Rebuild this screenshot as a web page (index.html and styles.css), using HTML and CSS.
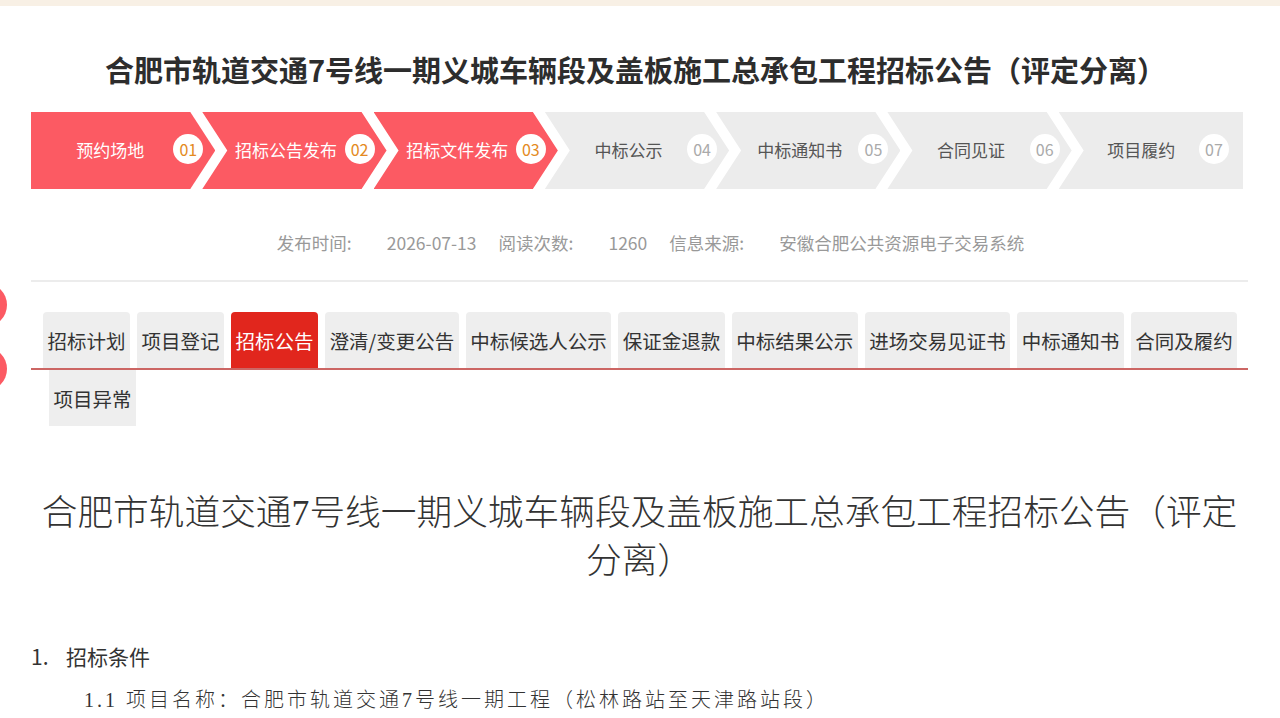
FILE: index.html
```html
<!DOCTYPE html>
<html lang="zh-CN">
<head>
<meta charset="utf-8">
<title>合肥市轨道交通7号线一期义城车辆段及盖板施工总承包工程招标公告（评定分离）</title>
<link rel="stylesheet" href="styles.css">
</head>
<body>
<div class="topbar"></div>

<div class="side-dock">
  <span class="side-dot"></span>
  <span class="side-dot"></span>
</div>

<main class="page">
  <h1 class="page-title">合肥市轨道交通7号线一期义城车辆段及盖板施工总承包工程招标公告（评定分离）</h1>

  <ol class="steps">
    <li class="step step-first is-done"><span class="step-label">预约场地</span><span class="step-num">01</span></li>
    <li class="step is-done"><span class="step-label">招标公告发布</span><span class="step-num">02</span></li>
    <li class="step is-done"><span class="step-label">招标文件发布</span><span class="step-num">03</span></li>
    <li class="step"><span class="step-label">中标公示</span><span class="step-num">04</span></li>
    <li class="step"><span class="step-label">中标通知书</span><span class="step-num">05</span></li>
    <li class="step"><span class="step-label">合同见证</span><span class="step-num">06</span></li>
    <li class="step step-last"><span class="step-label">项目履约</span><span class="step-num">07</span></li>
  </ol>

  <div class="meta">
    <span class="meta-item"><span class="meta-key">发布时间:</span><span class="meta-val">2026-07-13</span></span>
    <span class="meta-item"><span class="meta-key">阅读次数:</span><span class="meta-val">1260</span></span>
    <span class="meta-item"><span class="meta-key">信息来源:</span><span class="meta-val">安徽合肥公共资源电子交易系统</span></span>
  </div>

  <ul class="tabs">
    <li class="tab">招标计划</li>
    <li class="tab">项目登记</li>
    <li class="tab tab-active">招标公告</li>
    <li class="tab">澄清/变更公告</li>
    <li class="tab">中标候选人公示</li>
    <li class="tab">保证金退款</li>
    <li class="tab">中标结果公示</li>
    <li class="tab">进场交易见证书</li>
    <li class="tab">中标通知书</li>
    <li class="tab">合同及履约</li>
    <li class="tab tab-wrap">项目异常</li>
  </ul>

  <article class="notice">
    <h2 class="notice-title">合肥市轨道交通7号线一期义城车辆段及盖板施工总承包工程招标公告（评定分离）</h2>
    <h3 class="notice-section"><span class="section-no">1.</span>招标条件</h3>
    <p class="notice-line">1.1 项目名称：合肥市轨道交通7号线一期工程（松林路站至天津路站段）</p>
  </article>
</main>
</body>
</html>
```

FILE: styles.css
```css
* {
  box-sizing: border-box;
}

html, body {
  margin: 0;
  padding: 0;
  background: #fff;
  overflow: hidden;
}

body {
  font-family: "Noto Sans CJK SC", "Liberation Sans", sans-serif;
  color: #333;
}

.topbar {
  height: 6px;
  background: #f8f0e5;
}

/* floating dock on the left edge */
.side-dock {
  position: fixed;
  left: -37px;
  top: 283px;
  display: flex;
  flex-direction: column;
  gap: 20px;
}

.side-dot {
  display: block;
  width: 44px;
  height: 44px;
  border-radius: 50%;
  background: #fc5a63;
}

.page {
  width: 1217px;
  margin-left: 31px;
}

.page-title {
  margin: 43px 0 0;
  font-size: 29px;
  line-height: 40px;
  font-weight: 700;
  color: #2d2d2d;
  text-align: center;
  padding-right: 8px;
}

/* progress chevrons: seven equal arrows overlapping by 13px */
.steps {
  list-style: none;
  margin: 23px 0 0;
  padding: 0;
  display: flex;
  width: 1212px;
  height: 77px;
}

.step {
  flex: 0 0 calc((1212px + 78px) / 7);
  margin-right: -13px;
  display: flex;
  align-items: center;
  padding: 0 12px 3px 25px;
  background: #ececec;
  color: #555;
  font-size: 17px;
  clip-path: polygon(0 0, calc(100% - 25px) 0, 100% 50%, calc(100% - 25px) 100%, 0 100%, 25px 50%);
}

.step-first {
  padding-left: 16px;
  clip-path: polygon(0 0, calc(100% - 25px) 0, 100% 50%, calc(100% - 25px) 100%, 0 100%);
}

.step-last {
  margin-right: 0;
  padding-right: 14px;
  clip-path: polygon(0 0, 100% 0, 100% 100%, 0 100%, 25px 50%);
}

.step.is-done {
  background: #fc5a63;
  color: #fff;
}

.step-label {
  flex: 1;
  text-align: center;
  white-space: nowrap;
}

.step-num {
  flex: none;
  width: 30px;
  height: 30px;
  border-radius: 50%;
  background: #fff;
  color: #aaa;
  font-size: 16px;
  line-height: 30px;
  text-align: center;
}

.is-done .step-num {
  color: #e48a22;
}

/* publish info */
.meta {
  margin-top: 42px;
  display: flex;
  justify-content: center;
  padding-left: 22px;
  font-size: 17.5px;
  line-height: 24px;
  color: #999;
}

.meta-item {
  margin-right: 22px;
}

.meta-item:last-child {
  margin-right: 0;
}

.meta-key {
  margin-right: 35px;
}

.meta + .tabs {
  border-top: 2px solid #ececec;
}

/* category tabs */
.tabs {
  list-style: none;
  margin: 25px 0 0;
  padding: 30px 0 0 12px;
  display: flex;
  flex-wrap: wrap;
  column-gap: 7px;
  row-gap: 2px;
  background: linear-gradient(#cc6664, #cc6664) 0 86px / 100% 2px no-repeat;
}

.tab {
  height: 56px;
  padding: 0 4.5px;
  display: flex;
  align-items: center;
  font-size: 19.5px;
  color: #333;
  background: #eee;
  border-radius: 4px 4px 0 0;
  white-space: nowrap;
}

.tab-active {
  background: #e1261d;
  color: #fff;
}

.tab-wrap {
  margin-left: 6px;
  border-radius: 0;
}

/* notice body */
.notice-title {
  margin: 63px 0 0;
  font-family: "Liberation Serif", "Noto Sans CJK SC", serif;
  font-weight: 300;
  font-size: 35.7px;
  line-height: 48px;
  color: #333;
  text-align: center;
}

.notice-section {
  margin: 55px 0 0;
  font-size: 21px;
  line-height: 32px;
  font-weight: 400;
  color: #333;
}

.section-no {
  display: inline-block;
  width: 35px;
}

.notice-line {
  margin: 12px 0 0 53px;
  font-family: "Liberation Serif", "Noto Sans CJK SC", serif;
  font-weight: 300;
  font-size: 20px;
  line-height: 32px;
  letter-spacing: 3px;
  color: #333;
}
```
